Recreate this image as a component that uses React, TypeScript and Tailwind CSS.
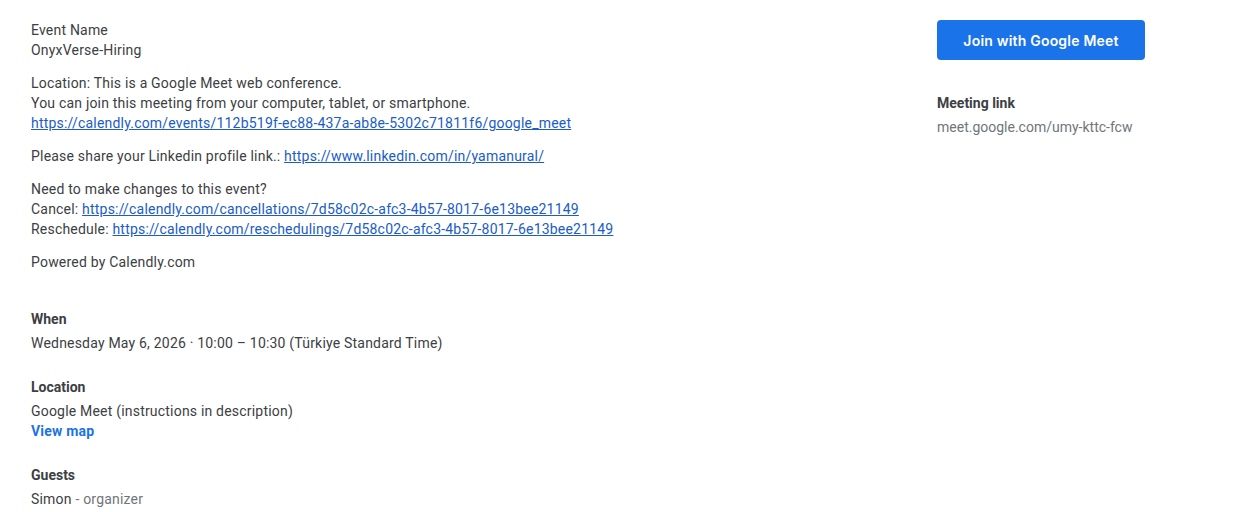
import React from "react";

const Section: React.FC<{ label: string; children: React.ReactNode }> = ({ label, children }) => (
  <div className="mt-6 first:mt-0">
    <div className="font-bold leading-5 text-[#3c4043]">{label}</div>
    <div className="mt-1 leading-5 tracking-[0.2px]">{children}</div>
  </div>
);

const Link: React.FC<{ href: string }> = ({ href }) => (
  <a href={href} className="text-[#1a5cc8] underline">
    {href}
  </a>
);

const App: React.FC = () => {
  return (
    <div className="min-h-[512px] w-[1256px] bg-white font-['Roboto',sans-serif] text-[14px] text-[#3c4043]">
      <div className="flex pt-5 pl-[31px]">
        <div className="w-[906px]">
          <div className="leading-5 tracking-[0.2px]">
            <p>
              Event Name
              <br />
              OnyxVerse-Hiring
            </p>
            <p className="mt-[13px]">
              Location: This is a Google Meet web conference.
              <br />
              You can join this meeting from your computer, tablet, or smartphone.
              <br />
              <Link href="https://calendly.com/events/112b519f-ec88-437a-ab8e-5302c71811f6/google_meet" />
            </p>
            <p className="mt-[13px]">
              Please share your Linkedin profile link.: <Link href="https://www.linkedin.com/in/yamanural/" />
            </p>
            <p className="mt-[13px]">
              Need to make changes to this event?
              <br />
              Cancel: <Link href="https://calendly.com/cancellations/7d58c02c-afc3-4b57-8017-6e13bee21149" />
              <br />
              Reschedule: <Link href="https://calendly.com/reschedulings/7d58c02c-afc3-4b57-8017-6e13bee21149" />
            </p>
            <p className="mt-[13px]">Powered by Calendly.com</p>
          </div>

          <div className="mt-[37px]">
            <Section label="When">Wednesday May 6, 2026 · 10:00 – 10:30 (Türkiye Standard Time)</Section>
            <Section label="Location">
              <div>Google Meet (instructions in description)</div>
              <a href="#" className="font-bold text-[#1a73e8]">
                View map
              </a>
            </Section>
            <Section label="Guests">
              Simon <span className="text-[#70757a]">- organizer</span>
            </Section>
          </div>
        </div>

        <div className="w-[260px]">
          <button className="h-10 w-[208px] rounded bg-[#1a73e8] font-['Inter',sans-serif] text-[14px] font-semibold tracking-[0.2px] text-white">
            Join with Google Meet
          </button>
          <div className="mt-[33px] font-bold leading-5">Meeting link</div>
          <div className="mt-1 leading-5 text-[#70757a]">meet.google.com/umy-kttc-fcw</div>
        </div>
      </div>
    </div>
  );
};

export default App;
